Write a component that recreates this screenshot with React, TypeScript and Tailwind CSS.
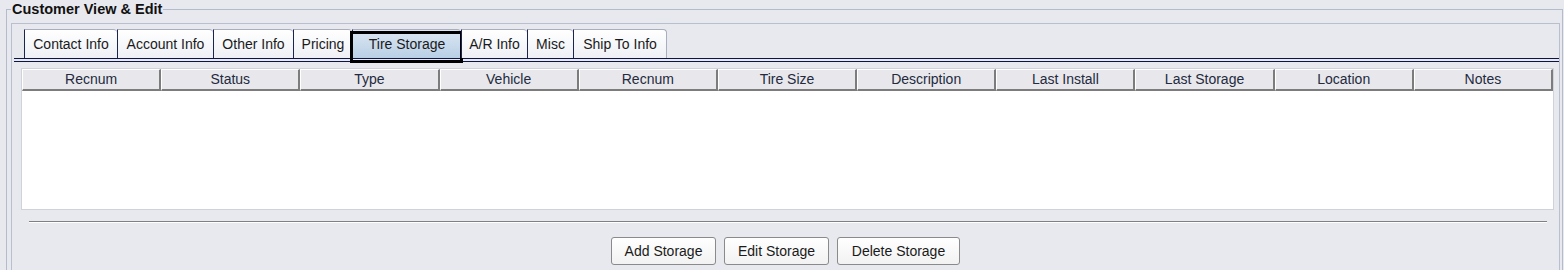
import React from "react";

const tabs = [
  { label: "Contact Info", w: "w-[93px]" },
  { label: "Account Info", w: "w-[96px]" },
  { label: "Other Info", w: "w-[80px]" },
  { label: "Pricing", w: "w-[59px]" },
  { label: "Tire Storage", w: "w-[109px]", active: true },
  { label: "A/R Info", w: "w-[66px]" },
  { label: "Misc", w: "w-[46px]" },
  { label: "Ship To Info", w: "w-[94px]", last: true },
];

const columns = [
  "Recnum",
  "Status",
  "Type",
  "Vehicle",
  "Recnum",
  "Tire Size",
  "Description",
  "Last Install",
  "Last Storage",
  "Location",
  "Notes",
];

const buttons = [
  { label: "Add Storage", w: "w-[105px]" },
  { label: "Edit Storage", w: "w-[105px]" },
  { label: "Delete Storage", w: "w-[123px]" },
];

export default function App() {
  return (
    <div
      className="h-[270px] w-[1564px] overflow-hidden bg-[#e8e9ef] text-[14px] text-[#1a1a1a]"
      style={{ fontFamily: '"Liberation Sans", Arial, sans-serif' }}
    >
      <fieldset className="m-0 ml-[6px] h-[300px] w-[1557px] border border-[#b4bccb] pl-[4px] pr-[2px] pt-0">
        <legend className="ml-0 px-[1px] text-[14.5px] font-bold leading-[18px] text-[#111]">
          Customer View &amp; Edit
        </legend>

        {/* inner tab panel */}
        <div className="mt-[5px] h-[280px] w-[1549px] border border-[#b8c0d0]">
          {/* tab strip */}
          <div className="flex pl-[12px] pt-[5px]">
            {tabs.map((t) => (
              <div
                key={t.label}
                className={`relative flex h-[29px] items-center justify-center rounded-tr-[4px] border-l border-t border-l-[#1c2450] border-t-[#a8aebc] ${
                  t.last ? "border-r border-r-[#a8aebc]" : ""
                } ${t.w} ${
                  t.active
                    ? "bg-gradient-to-b from-[#dbe7f3] to-[#b9cfe5] text-[#1a1a1a]"
                    : "bg-gradient-to-b from-[#ffffff] to-[#eef0f5]"
                }`}
              >
                {t.label}
                {t.active && (
                  <div className="absolute left-[-3px] top-[1px] h-[32px] w-[113px] border-[3px] border-black" />
                )}
              </div>
            ))}
          </div>

          {/* double rule under tabs */}
          <div className="ml-[2px] h-[4px] border-y border-[#0c1545]" />

          {/* table */}
          <div className="ml-[9px] mr-[5px] mt-[6px] h-[142px] border border-[#cfd2dc] bg-white">
            <div className="grid grid-cols-11 bg-[#e8e8ec]">
              {columns.map((c, i) => (
                <div
                  key={i}
                  className="flex h-[22px] items-center justify-center border-l border-t border-white border-r-2 border-b-2 border-r-[#7c7c7c] border-b-[#7c7c7c] text-[#242a40]"
                >
                  {c}
                </div>
              ))}
            </div>
          </div>

          {/* separator */}
          <div className="ml-[17px] mr-[12px] mt-[11px] h-[2px] border-t border-b border-t-[#808080] border-b-white" />

          {/* buttons */}
          <div className="mt-[14px] flex justify-center gap-[8px]">
            {buttons.map((b) => (
              <button
                key={b.label}
                className={`h-[28px] ${b.w} rounded-[3px] border border-[#8a8a8a] bg-gradient-to-b from-white to-[#f2f2f2] text-[14px] text-[#1a1a1a]`}
              >
                {b.label}
              </button>
            ))}
          </div>
        </div>
      </fieldset>
    </div>
  );
}
